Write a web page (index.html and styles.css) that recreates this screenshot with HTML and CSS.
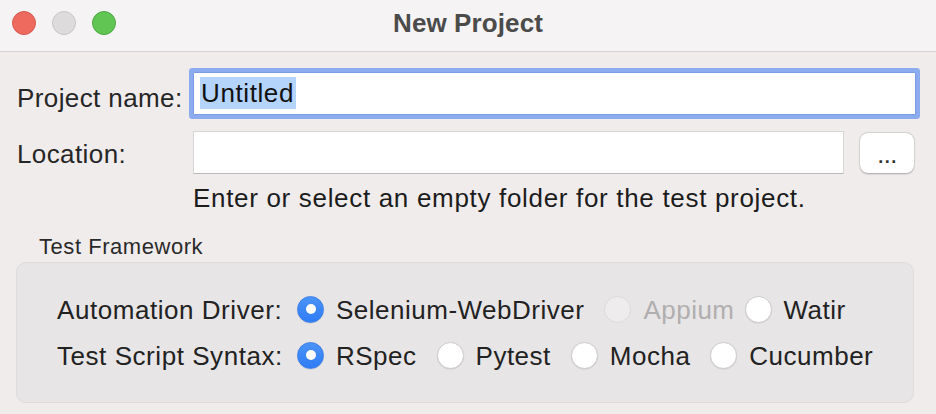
FILE: index.html
```html
<!DOCTYPE html>
<html>
<head>
<meta charset="utf-8">
<link rel="stylesheet" href="styles.css">
</head>
<body>
<div class="window">
  <header class="titlebar">
    <div class="lights">
      <span class="light red"></span>
      <span class="light gray"></span>
      <span class="light green"></span>
    </div>
    <div class="title">New Project</div>
    <div></div>
  </header>
  <main class="content">
    <div class="row row-name">
      <label class="label label-name">Project name:</label>
      <div class="field field-focus"><span class="sel">Untitled</span></div>
    </div>
    <div class="row row-loc">
      <label class="label label-loc">Location:</label>
      <div class="field field-loc"></div>
      <button class="browse">...</button>
    </div>
    <div class="hint">Enter or select an empty folder for the test project.</div>
    <div class="group-title">Test Framework</div>
    <section class="group">
      <div class="opt-row">
        <div class="opt-label">Automation Driver:</div>
        <div class="opts">
          <span class="opt"><span class="radio on"></span><span>Selenium-WebDriver</span></span>
          <span class="opt disabled"><span class="radio dis"></span><span>Appium</span></span>
          <span class="opt tight"><span class="radio"></span><span>Watir</span></span>
        </div>
      </div>
      <div class="opt-row">
        <div class="opt-label">Test Script Syntax:</div>
        <div class="opts">
          <span class="opt"><span class="radio on"></span><span>RSpec</span></span>
          <span class="opt"><span class="radio"></span><span>Pytest</span></span>
          <span class="opt"><span class="radio"></span><span>Mocha</span></span>
          <span class="opt"><span class="radio"></span><span>Cucumber</span></span>
        </div>
      </div>
    </section>
  </main>
</div>
</body>
</html>
```
FILE: styles.css
```css
html, body {
  margin: 0;
  padding: 0;
  background: #f0ecec;
  font-family: "Liberation Sans", Arial, sans-serif;
  color: #222;
}
.window {
  width: 936px;
  height: 414px;
  overflow: hidden;
}
.titlebar {
  height: 52px;
  box-sizing: border-box;
  background: #f6f3f4;
  border-bottom: 1px solid #d6d3d4;
  display: grid;
  grid-template-columns: 1fr auto 1fr;
  align-items: start;
}
.lights {
  display: flex;
  gap: 16px;
  padding: 11px 0 0 12px;
}
.light {
  width: 24px;
  height: 24px;
  box-sizing: border-box;
  border-radius: 50%;
  border: 1px solid;
}
.red { background: #ee6a5f; border-color: #d65a50; }
.gray { background: #dddbdb; border-color: #c9c6c7; }
.green { background: #61c554; border-color: #4ea743; }
.title {
  font-weight: bold;
  font-size: 26px;
  line-height: 30px;
  padding-top: 8px;
  color: #4b4b4b;
  letter-spacing: 0.1px;
}
.content {
  padding: 0 20px 0 17px;
}
.row {
  display: flex;
  align-items: flex-start;
}
.label {
  width: 176px;
  font-size: 26px;
  line-height: 30px;
  color: #262626;
  letter-spacing: 0.4px;
  flex: none;
}
.row-name { padding-top: 20px; }
.label-name { margin-top: 11px; }
.field {
  height: 43px;
  box-sizing: border-box;
  background: #fff;
}
.field-focus {
  flex: 1;
  border: 1px solid #7b9ce6;
  box-shadow: 0 0 0 4px #8dacef;
  border-radius: 1px;
  padding: 4px 0 0 6px;
}
.sel {
  display: inline-block;
  background: #b4d4fb;
  font-size: 26px;
  line-height: 32px;
  padding: 0 2px 0 1px;
  letter-spacing: 0.6px;
  color: #111;
}
.row-loc { padding-top: 16px; }
.label-loc { margin-top: 8px; }
.field-loc {
  flex: 1;
  border: 1px solid #d8d5d5;
  border-bottom-color: #bdbaba;
}
.browse {
  flex: none;
  width: 54px;
  height: 40px;
  margin: 2px 2px 0 16px;
  background: #fff;
  border: none;
  border-radius: 8px;
  box-shadow: 0 0.5px 2px rgba(0,0,0,0.28), 0 0 0 0.5px rgba(0,0,0,0.08);
  font-family: "Liberation Sans", Arial, sans-serif;
  font-size: 18px;
  font-weight: bold;
  letter-spacing: 1.5px;
  color: #333;
  padding: 9px 0 0 2px;
}
.hint {
  margin: 9px 0 0 176px;
  font-size: 26px;
  line-height: 30px;
  letter-spacing: 0.68px;
  color: #1c1c1c;
}
.group-title {
  margin: 21px 0 0 22px;
  font-size: 22px;
  line-height: 26px;
  letter-spacing: 0.55px;
  color: #2a2a2a;
}
.group {
  margin: 2px 2px 0 -1px;
  height: 141px;
  box-sizing: border-box;
  background: #e8e5e6;
  border: 1px solid #dedbdc;
  border-radius: 10px;
  padding: 32px 0 0 40px;
  display: flex;
  flex-direction: column;
  gap: 16px;
}
.opt-row {
  display: flex;
  align-items: center;
  height: 30px;
}
.opt-label {
  width: 240px;
  flex: none;
  font-size: 26px;
  line-height: 30px;
  letter-spacing: 0.55px;
  color: #222;
}
.opts {
  display: flex;
  gap: 20px;
  align-items: center;
}
.opt {
  display: flex;
  align-items: center;
  gap: 12px;
  font-size: 26px;
  line-height: 30px;
  letter-spacing: 0.5px;
  color: #222;
}
.opt.tight { margin-left: -10px; }
.opt.disabled { color: #b1aeaf; }
.radio {
  width: 27px;
  height: 27px;
  box-sizing: border-box;
  border-radius: 50%;
  background: #fff;
  border: 1px solid #cfcccd;
  box-shadow: 0 0.5px 1px rgba(0,0,0,0.12);
  position: relative;
  margin-top: -2px;
}
.radio.on {
  background: linear-gradient(#4a93f8, #2f7cf4);
  border-color: #3a7fe8;
}
.radio.on::after {
  content: "";
  position: absolute;
  left: 7.5px;
  top: 7.5px;
  width: 10px;
  height: 10px;
  border-radius: 50%;
  background: #fff;
}
.radio.dis {
  background: #eeeced;
  border-color: #dddadb;
  box-shadow: none;
}
```
